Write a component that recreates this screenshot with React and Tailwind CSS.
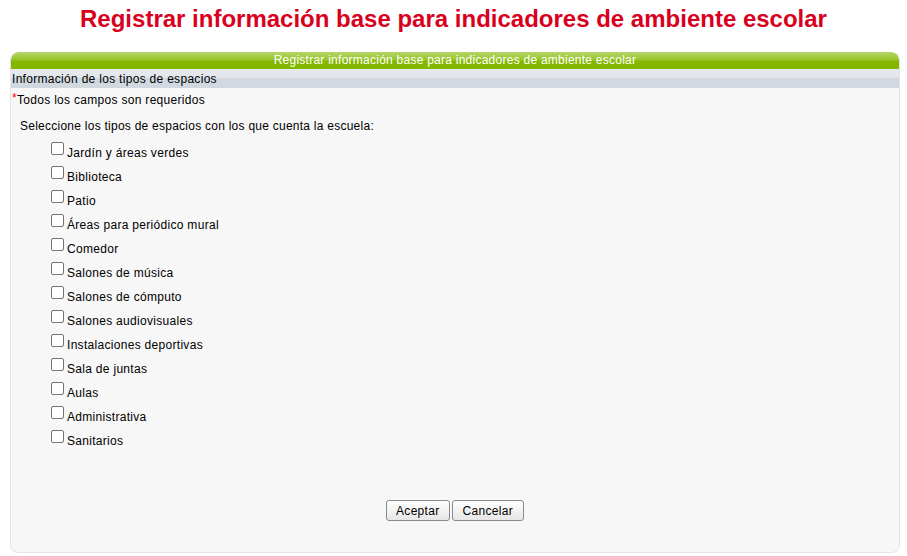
import React from "react";

const items = [
  "Jardín y áreas verdes",
  "Biblioteca",
  "Patio",
  "Áreas para periódico mural",
  "Comedor",
  "Salones de música",
  "Salones de cómputo",
  "Salones audiovisuales",
  "Instalaciones deportivas",
  "Sala de juntas",
  "Aulas",
  "Administrativa",
  "Sanitarios",
];

export default function App() {
  return (
    <div className="w-[907px] h-[556px] bg-white overflow-hidden" style={{ fontFamily: '"Liberation Sans", Arial, sans-serif' }}>
      <h1 className="text-center text-[24px] font-bold text-[#d9001e] leading-[28px] pt-[5px] h-[52px]">
        Registrar información base para indicadores de ambiente escolar
      </h1>
      <div className="mx-[10px] w-[890px] h-[501px] flex flex-col rounded-[8px] border border-[#e4e4e4] border-t-0 bg-[#f7f7f7] overflow-hidden tracking-[0.3px]">
        <div className="h-[17px] bg-[linear-gradient(#b4d76a_0%,#98c52a_45%,#84b800_55%,#84b800_100%)] text-white text-[12px] leading-[17px] text-center rounded-t-[8px] tracking-[0.25px]">
          Registrar información base para indicadores de ambiente escolar
        </div>
        <div className="h-[19px] bg-[linear-gradient(#e6e9ed_0%,#e1e5ea_50%,#d1d8e0_50%,#d1d8e0_100%)] text-[12px] leading-[18px] pt-[1px] text-black pl-[1px]">
          Información de los tipos de espacios
        </div>
        <div className="text-[12px] text-black leading-[14px] pt-[5px] pl-[1px]">
          <span className="text-[#ff0000] relative top-[-2px]">*</span>Todos los campos son requeridos
        </div>
        <div className="text-[12px] text-black leading-[14px] pt-[12px] pl-[9px] tracking-[0.25px]">
          Seleccione los tipos de espacios con los que cuenta la escuela:
        </div>
        <div className="flex flex-col pl-[40px] pt-[11px]">
          {items.map((it) => (
            <label key={it} className="flex items-start h-[24px] text-[12px] leading-[14px] text-black">
              <span className="mt-[-2px] w-[13px] h-[13px] border border-[#767676] rounded-[2px] bg-white mr-[3px] shrink-0" />
              <span className="pt-[2px]">{it}</span>
            </label>
          ))}
        </div>
        <div className="flex justify-center gap-[2px] mt-[44px]">
          <button className="h-[21px] px-[9px] text-[12px] text-black border border-[#8a8a8a] rounded-[3px] bg-[linear-gradient(#ffffff,#e6e6e6)]">
            Aceptar
          </button>
          <button className="h-[21px] px-[10px] text-[12px] text-black border border-[#8a8a8a] rounded-[3px] bg-[linear-gradient(#ffffff,#e6e6e6)]">
            Cancelar
          </button>
        </div>
      </div>
    </div>
  );
}
